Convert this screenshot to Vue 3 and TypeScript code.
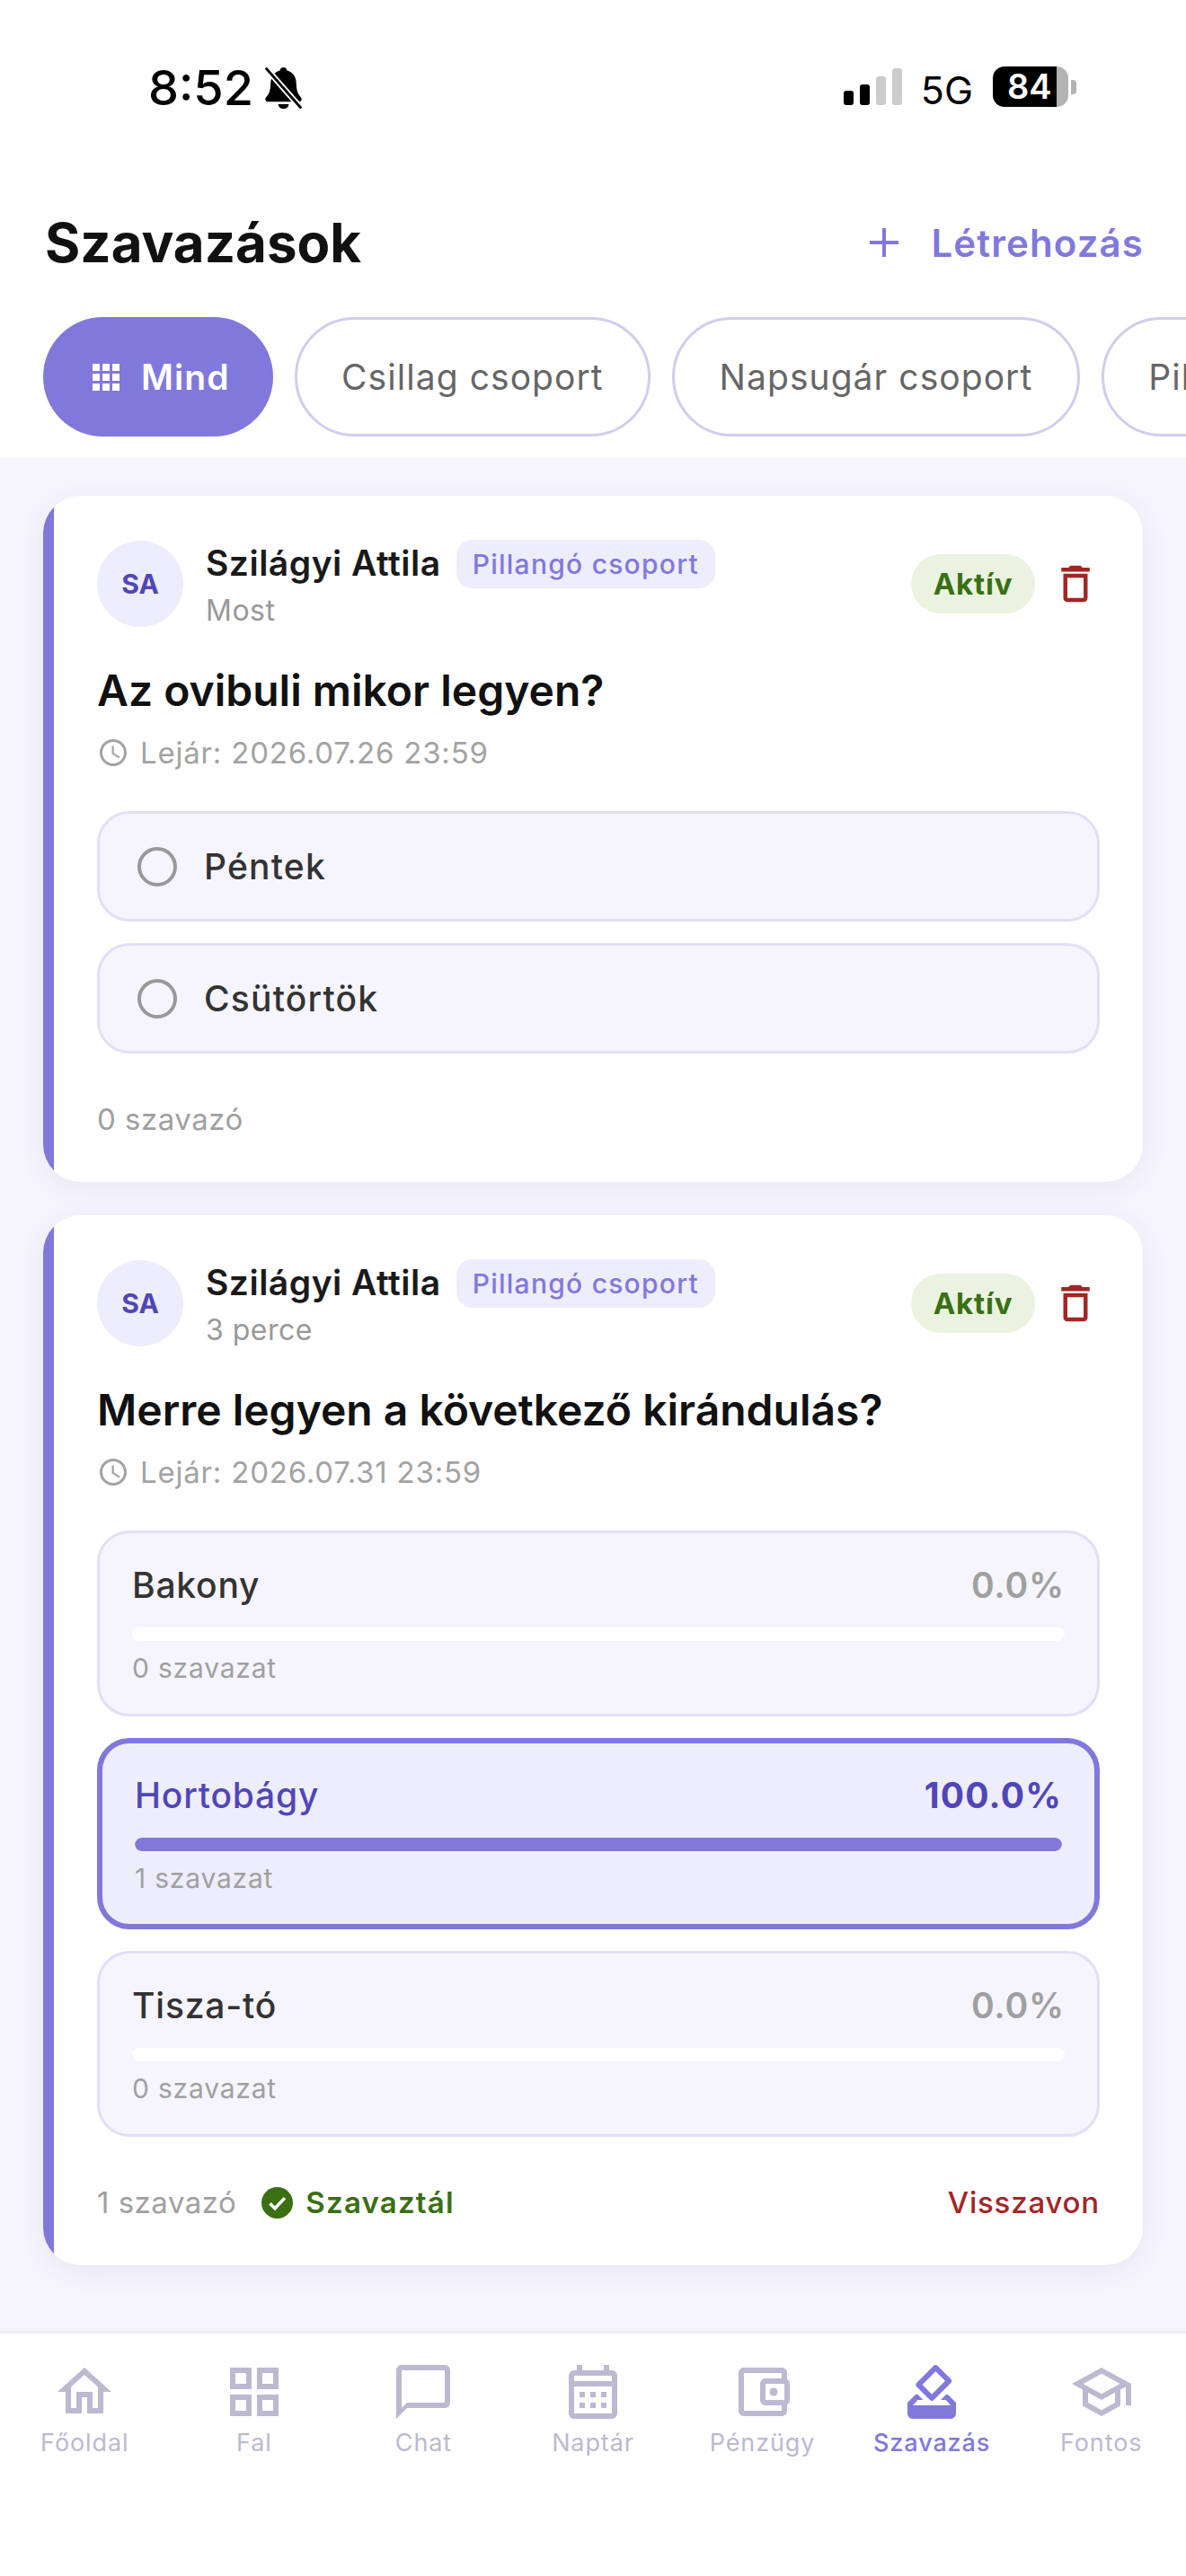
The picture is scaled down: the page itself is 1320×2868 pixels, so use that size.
<template>
  <div class="screen">
    <div class="status-bar">
      <div class="status-left">
        <span class="clock">8:52</span>
        <svg class="bell" viewBox="2.500 1.500 19 21">
          <path d="M12 1.500c-1 0-1.700.7-1.800 1.600C7.200 3.900 5.600 6.400 5.500 9.500c-.1 3.400-.6 5.300-2 6.800-.5.500-.7 1-.7 1.400 0 .8.600 1.300 1.500 1.300h15.400c.9 0 1.500-.5 1.500-1.300 0-.4-.2-.9-.7-1.400-1.400-1.500-1.900-3.400-2-6.800-.1-3.100-1.700-5.600-4.700-6.400-.1-.9-.8-1.600-1.800-1.600zM9.300 20.200c.1 1.400 1.200 2.400 2.700 2.400s2.600-1 2.700-2.400z" fill="#000" />
          <path d="M3 1.800l18 20.500" stroke="#fff" stroke-width="3" />
          <path d="M3 1.800l18 20.500" stroke="#000" stroke-width="1.300" />
        </svg>
      </div>
      <div class="status-right">
        <div class="signal">
          <i class="on s1"></i><i class="on s2"></i><i class="s3"></i><i class="s4"></i>
        </div>
        <span class="net">5G</span>
        <div class="battery">
          <div class="battery-body"><span>84</span></div>
          <div class="battery-cap"></div>
        </div>
      </div>
    </div>

    <header class="top">
      <div class="title-row">
        <h1>Szavazások</h1>
        <div class="create">
          <svg class="plus" viewBox="0 0 32 32"><path d="M16 0v32M0 16h32" stroke="#8178dc" stroke-width="4" /></svg>
          <span>Létrehozás</span>
        </div>
      </div>
      <div class="chips">
        <div class="chip active">
          <svg class="apps" viewBox="0 0 30 30">
            <rect v-for="c in gridCells" :key="c.k" :x="c.x" :y="c.y" width="8" height="8" fill="#fff" />
          </svg>
          <span>Mind</span>
        </div>
        <div v-for="g in groups" :key="g" class="chip">{{ g }}</div>
      </div>
    </header>

    <main class="list">
      <article class="card">
        <div class="card-head">
          <div class="avatar">SA</div>
          <div class="who">
            <div class="who-top">
              <span class="name">Szilágyi Attila</span>
              <span class="tag">Pillangó csoport</span>
            </div>
            <div class="ago">Most</div>
          </div>
          <span class="badge">Aktív</span>
          <svg class="trash" viewBox="0 0 24 24"><path :d="trashPath" /></svg>
        </div>
        <h2>Az ovibuli mikor legyen?</h2>
        <div class="expire">
          <svg class="clock-icon" viewBox="0 0 24 24"><path :d="clockPath" /></svg>
          <span>Lejár: 2026.07.26 23:59</span>
        </div>
        <div class="options">
          <div v-for="o in firstOptions" :key="o" class="option">
            <span class="radio"></span>
            <span>{{ o }}</span>
          </div>
        </div>
        <div class="foot"><span class="voters">0 szavazó</span></div>
      </article>

      <article class="card">
        <div class="card-head">
          <div class="avatar">SA</div>
          <div class="who">
            <div class="who-top">
              <span class="name">Szilágyi Attila</span>
              <span class="tag">Pillangó csoport</span>
            </div>
            <div class="ago">3 perce</div>
          </div>
          <span class="badge">Aktív</span>
          <svg class="trash" viewBox="0 0 24 24"><path :d="trashPath" /></svg>
        </div>
        <h2>Merre legyen a következő kirándulás?</h2>
        <div class="expire">
          <svg class="clock-icon" viewBox="0 0 24 24"><path :d="clockPath" /></svg>
          <span>Lejár: 2026.07.31 23:59</span>
        </div>
        <div class="options">
          <div v-for="r in results" :key="r.label" class="result" :class="{ mine: r.mine }">
            <div class="result-top">
              <span class="result-label">{{ r.label }}</span>
              <span class="result-pct">{{ r.pct.toFixed(1) }}%</span>
            </div>
            <div class="bar"><div class="bar-fill" :style="{ width: r.pct + '%' }"></div></div>
            <div class="result-count">{{ r.votes }} szavazat</div>
          </div>
        </div>
        <div class="foot">
          <span class="voters">1 szavazó</span>
          <svg class="check" viewBox="0 0 24 24">
            <circle cx="12" cy="12" r="12" fill="#3a6f14" />
            <path d="M6.500 12.500l3.800 3.800 7.500-8" fill="none" stroke="#fff" stroke-width="2.400" />
          </svg>
          <span class="voted">Szavaztál</span>
          <span class="undo">Visszavon</span>
        </div>
      </article>
    </main>

    <nav class="tabs">
      <div v-for="t in tabs" :key="t.label" class="tab" :class="{ current: t.current }">
        <svg viewBox="0 0 24 24">
          <path :d="t.icon" />
          <circle v-if="t.dot" cx="16" cy="12" r="1.500" />
        </svg>
        <span>{{ t.label }}</span>
      </div>
    </nav>
  </div>
</template>

<script setup lang="ts">
const groups = ["Csillag csoport", "Napsugár csoport", "Pillangó csoport"];
const firstOptions = ["Péntek", "Csütörtök"];

const results = [
  { label: "Bakony", pct: 0, votes: 0, mine: false },
  { label: "Hortobágy", pct: 100, votes: 1, mine: true },
  { label: "Tisza-tó", pct: 0, votes: 0, mine: false },
];

// 3x3 dots of the "Mind" chip
const gridCells = [0, 11, 22].flatMap((y) =>
  [0, 11, 22].map((x) => ({ k: `${x}-${y}`, x, y }))
);

const trashPath =
  "M16 9v10H8V9h8m-1.500-6h-5l-1 1H5v2h14V4h-3.500l-1-1zM18 7H6v12c0 1.100.9 2 2 2h8c1.100 0 2-.9 2-2V7z";
const clockPath =
  "M11.990 2C6.470 2 2 6.480 2 12s4.470 10 9.990 10C17.520 22 22 17.520 22 12S17.520 2 11.990 2zM12 20c-4.420 0-8-3.580-8-8s3.580-8 8-8 8 3.580 8 8-3.580 8-8 8zm.500-13H11v6l5.250 3.150.750-1.230-4.500-2.670z";

const tabs = [
  {
    label: "Főoldal",
    icon: "M12 5.690l5 4.500V18h-2v-6H9v6H7v-7.810l5-4.500M12 3L2 12h3v8h6v-6h2v6h6v-8h3L12 3z",
  },
  {
    label: "Fal",
    icon: "M3 3v8h8V3H3zm6 6H5V5h4v4zm-6 4v8h8v-8H3zm6 6H5v-4h4v4zm4-16v8h8V3h-8zm6 6h-4V5h4v4zm-6 4v8h8v-8h-8zm6 6h-4v-4h4v4z",
  },
  {
    label: "Chat",
    icon: "M20 2H4c-1.100 0-2 .9-2 2v18l4-4h14c1.100 0 2-.9 2-2V4c0-1.100-.9-2-2-2zm0 14H6l-2 2V4h16v12z",
  },
  {
    label: "Naptár",
    icon: "M19 4h-1V2h-2v2H8V2H6v2H5c-1.110 0-1.990.9-1.990 2L3 20c0 1.100.89 2 2 2h14c1.100 0 2-.9 2-2V6c0-1.100-.9-2-2-2zm0 16H5V10h14v10zm0-12H5V6h14v2zM9 14H7v-2h2v2zm4 0h-2v-2h2v2zm4 0h-2v-2h2v2zm-8 4H7v-2h2v2zm4 0h-2v-2h2v2zm4 0h-2v-2h2v2z",
  },
  {
    label: "Pénzügy",
    dot: true,
    icon: "M21 7.280V5c0-1.100-.9-2-2-2H5c-1.110 0-2 .9-2 2v14c0 1.100.89 2 2 2h14c1.100 0 2-.9 2-2v-2.280c.59-.35 1-.98 1-1.720V9c0-.74-.41-1.380-1-1.720zM20 9v6h-7V9h7zM5 19V5h14v2h-6c-1.100 0-2 .9-2 2v6c0 1.100.9 2 2 2h6v2H5z",
  },
  {
    label: "Szavazás",
    current: true,
    icon: "M18 13h-.68l-2 2h1.910L19 17H5l1.780-2h2.050l-2-2H6l-3 3v4c0 1.100.89 2 1.990 2H19c1.100 0 2-.89 2-2v-4l-3-3zM11.340 15.020c.39.39 1.020.39 1.410 0l6.370-6.370c.39-.39.39-1.020 0-1.410L14.160 2.300c-.38-.4-1.010-.4-1.400-.01L6.390 8.660c-.39.39-.39 1.020 0 1.410l4.950 4.950zm2.120-10.610L17 7.950l-4.950 4.950-3.540-3.540 4.950-4.950z",
  },
  {
    label: "Fontos",
    icon: "M12 3L1 9l4 2.180v6L12 21l7-3.820v-6l2-1.090V17h2V9L12 3zm6.820 6L12 12.720 5.180 9 12 5.280 18.820 9zM17 15.990l-5 2.730-5-2.730v-3.720L12 15l5-2.730v3.720z",
  },
];
</script>

<style>
html,
body {
  margin: 0;
  background: #fff;
}
</style>

<style scoped>
* {
  box-sizing: border-box;
}

.screen {
  width: 1320px;
  height: 2868px;
  display: flex;
  flex-direction: column;
  overflow: hidden;
  background: #f6f5fe;
  font-family: Inter, "Noto Sans", sans-serif;
  color: #111;
}

/* status bar */
.status-bar {
  height: 190px;
  flex: none;
  display: flex;
  justify-content: space-between;
  padding: 66px 122px 0 165px;
  background: #fff;
}

.status-left {
  display: flex;
  align-items: flex-start;
  gap: 12px;
  height: 64px;
}

.clock {
  font-size: 54px;
  font-weight: 500;
  line-height: 64px;
  color: #000;
}

.bell {
  width: 43px;
  height: 46px;
  margin-top: 9px;
}

.status-right {
  display: flex;
  align-items: flex-start;
}

.signal {
  display: flex;
  align-items: flex-end;
  gap: 7px;
  height: 51px;
}

.signal i {
  width: 11px;
  background: #ccc;
  border-radius: 3px;
}

.signal .on {
  background: #000;
}

.s1 { height: 16px; }
.s2 { height: 23px; }
.s3 { height: 32px; }
.s4 { height: 41px; }

.net {
  margin-left: 21px;
  margin-top: 2px;
  font-size: 43px;
  font-weight: 400;
  line-height: 64px;
  color: #000;
}

.battery {
  display: flex;
  align-items: center;
  margin-left: 22px;
  margin-top: 8px;
}

.battery-body {
  width: 84px;
  height: 45px;
  border-radius: 13px;
  background: linear-gradient(to right, #000 71px, #b3b3b3 71px);
  color: #fff;
  font-size: 38px;
  font-weight: 600;
  line-height: 45px;
  padding-left: 16px;
}

.battery-cap {
  width: 6px;
  height: 16px;
  margin-left: 3px;
  background: #b3b3b3;
  border-radius: 0 4px 4px 0;
}

/* header */
.top {
  flex: none;
  height: 320px;
  background: #fff;
}

.title-row {
  height: 80px;
  margin-top: 40px;
  padding: 0 47px 0 50px;
  display: flex;
  align-items: center;
  justify-content: space-between;
}

h1 {
  margin: 0;
  font-size: 60px;
  font-weight: 700;
  color: #111;
}

.create {
  display: flex;
  align-items: center;
  gap: 37px;
  font-size: 42px;
  font-weight: 600;
  letter-spacing: 1.1px;
  color: #8178dc;
}

.plus {
  width: 32px;
  height: 32px;
}

.chips {
  display: flex;
  gap: 24px;
  padding: 43px 0 0 48px;
}

.chip {
  flex: none;
  height: 133px;
  padding: 0 49.500px;
  display: flex;
  align-items: center;
  border: 3px solid #d2cdec;
  border-radius: 67px;
  font-size: 39px;
  letter-spacing: 1.050px;
  color: #666;
  background: #fff;
}

.chip.active {
  gap: 24px;
  padding: 0 48px 0 55px;
  border: none;
  background: #8178dc;
  color: #fff;
  font-weight: 600;
}

.apps {
  width: 30px;
  height: 30px;
}

/* cards */
.list {
  flex: 1;
  padding: 42px 48px 0;
  display: flex;
  flex-direction: column;
  gap: 37px;
}

/* stripe is painted so its inner edge stays straight under the rounded corner */
.card {
  background: linear-gradient(to right, #8178dc 12px, #fff 12px);
  border-radius: 42px;
  padding: 48px 48px 0 60px;
  box-shadow: 0 6px 30px rgba(60, 50, 120, 0.08);
}

.card-head {
  display: flex;
  align-items: center;
  height: 100px;
}

.avatar {
  width: 96px;
  height: 96px;
  border-radius: 50%;
  background: #eeedfc;
  color: #5046b8;
  font-size: 30px;
  font-weight: 700;
  display: flex;
  align-items: center;
  justify-content: center;
  flex: none;
}

.who {
  margin-left: 25px;
  flex: 1;
}

.who-top {
  display: flex;
  align-items: center;
  gap: 17px;
  height: 54px;
}

.name {
  font-size: 39px;
  font-weight: 600;
  letter-spacing: 0.5px;
  line-height: 50px;
  margin-top: -2px;
  color: #1a1a1a;
}

.tag {
  height: 54px;
  padding: 0 18px;
  display: flex;
  align-items: center;
  border-radius: 18px;
  background: #eeedfc;
  color: #8178dc;
  font-size: 30px;
  font-weight: 500;
  letter-spacing: 1.250px;
}

.ago {
  margin-top: 5px;
  font-size: 32px;
  letter-spacing: 0.5px;
  color: #999;
}

.badge {
  width: 138px;
  height: 66px;
  border-radius: 33px;
  background: #e9f3df;
  color: #3a6f14;
  display: flex;
  align-items: center;
  justify-content: center;
  font-size: 33px;
  font-weight: 700;
  letter-spacing: 0.8px;
}

.trash {
  width: 54px;
  height: 54px;
  margin-left: 18px;
  fill: #a32626;
}

h2 {
  margin: 39px 0 0;
  font-size: 48px;
  line-height: 60px;
  font-weight: 600;
  color: #111;
}

.expire {
  display: flex;
  align-items: center;
  gap: 12px;
  margin-top: 17px;
  height: 44px;
  font-size: 33px;
  letter-spacing: 0.8px;
  color: #a3a3a3;
}

.clock-icon {
  width: 36px;
  height: 36px;
  fill: #a3a3a3;
}

.options {
  display: flex;
  flex-direction: column;
  gap: 24px;
  margin-top: 43px;
}

.option {
  height: 123px;
  padding: 0 36px 0 42px;
  display: flex;
  align-items: center;
  gap: 30px;
  background: #f6f5fe;
  border: 3px solid #e2dff6;
  border-radius: 36px;
  font-size: 39px;
  font-weight: 500;
  letter-spacing: 1.200px;
  color: #333;
}

.radio {
  width: 44px;
  height: 44px;
  border: 4px solid #999;
  border-radius: 50%;
}

.result {
  height: 207px;
  padding: 32px 36px 0;
  background: #f6f5fe;
  border: 3px solid #e2dff6;
  border-radius: 36px;
}

.result.mine {
  height: 213px;
  background: #eeedfc;
  border: 6px solid #8178dc;
}

.result-top {
  display: flex;
  justify-content: space-between;
  align-items: center;
  height: 50px;
  font-size: 39px;
  font-weight: 500;
  letter-spacing: 0.8px;
  color: #333;
}

.result-pct {
  font-weight: 600;
  color: #a0a0a0;
}

.mine .result-top {
  color: #5046b8;
}

.mine .result-pct {
  color: #5046b8;
  font-weight: 700;
  letter-spacing: 1.200px;
}

.bar {
  height: 15px;
  margin-top: 23px;
  border-radius: 8px;
  background: #fff;
  overflow: hidden;
}

.bar-fill {
  height: 100%;
  background: #8178dc;
  border-radius: 8px;
}

.result-count {
  margin-top: 12px;
  font-size: 30px;
  letter-spacing: 0.8px;
  color: #a0a0a0;
}

.foot {
  display: flex;
  align-items: center;
  height: 143px;
  padding-top: 3px;
  font-size: 33px;
  letter-spacing: 0.5px;
}

.voters {
  color: #a0a0a0;
}

.check {
  width: 35px;
  height: 35px;
  margin-left: 28px;
}

.voted {
  margin-left: 14px;
  font-weight: 600;
  letter-spacing: 1.200px;
  color: #3a6f14;
}

.undo {
  margin-left: auto;
  font-weight: 500;
  letter-spacing: 0.8px;
  color: #a32626;
}

/* bottom nav */
.tabs {
  flex: none;
  height: 273px;
  display: grid;
  grid-template-columns: repeat(7, 1fr);
  padding-top: 29px;
  background: #fff;
  border-top: 3px solid #edebf7;
}

.tab {
  display: flex;
  flex-direction: column;
  align-items: center;
  font-size: 27px;
  letter-spacing: 0.9px;
  color: #bdb9d0;
  fill: #bdb9d0;
}

.tab svg {
  width: 72px;
  height: 72px;
}

.tab span {
  margin-top: 4px;
}

.tab.current {
  color: #8178dc;
  fill: #8178dc;
  font-weight: 500;
}
</style>
